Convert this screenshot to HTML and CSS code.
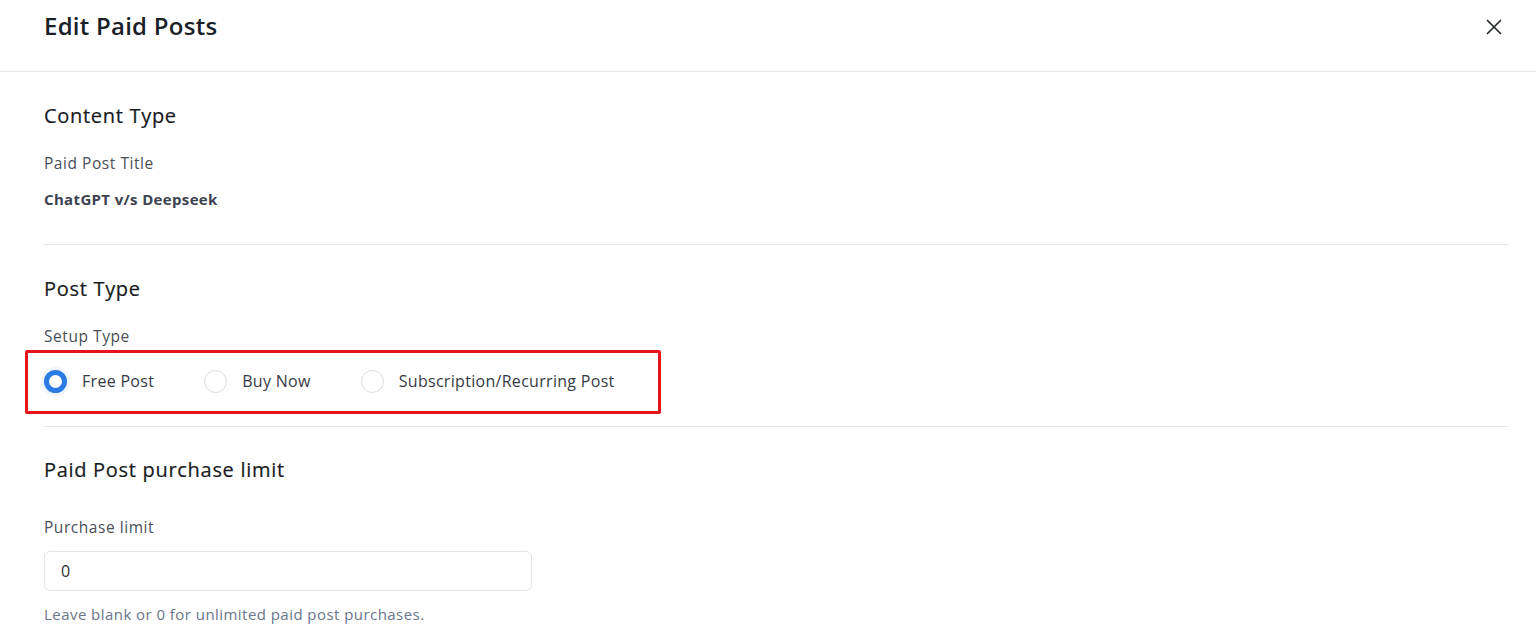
FILE: index.html
```html
<!DOCTYPE html>
<html lang="en">
<head>
<meta charset="utf-8">
<title>Edit Paid Posts</title>
<link rel="stylesheet" href="styles.css">
</head>
<body>
<div class="modal">
  <header class="modal-header">
    <h1 class="modal-title">Edit Paid Posts</h1>
    <button class="close-btn" aria-label="Close">
      <svg width="16" height="16" viewBox="0 0 16 16" fill="none" stroke="#25282e" stroke-width="1.7" stroke-linecap="round"><path d="M1.5 1.5 14.5 14.5M14.5 1.5 1.5 14.5"/></svg>
    </button>
  </header>
  <main class="modal-body">
    <section class="section">
      <h2 class="section-title">Content Type</h2>
      <div class="field-label">Paid Post Title</div>
      <div class="field-value">ChatGPT v/s Deepseek</div>
    </section>
    <section class="section">
      <h2 class="section-title">Post Type</h2>
      <div class="field-label">Setup Type</div>
      <div class="radio-group">
        <label class="radio"><span class="radio-dot checked"></span><span>Free Post</span></label>
        <label class="radio"><span class="radio-dot"></span><span>Buy Now</span></label>
        <label class="radio"><span class="radio-dot"></span><span>Subscription/Recurring Post</span></label>
        <div class="highlight"></div>
      </div>
    </section>
    <section class="section last">
      <h2 class="section-title">Paid Post purchase limit</h2>
      <div class="field-label spaced">Purchase limit</div>
      <div class="input">0</div>
      <div class="help">Leave blank or 0 for unlimited paid post purchases.</div>
    </section>
  </main>
</div>
</body>
</html>
```

FILE: styles.css
```css
* { box-sizing: border-box; }
html, body { margin: 0; padding: 0; background: #fff; }
body {
  font-family: "Open Sans", "Noto Sans", sans-serif;
  color: #1f232b;
  overflow: hidden;
}
.modal { width: 1536px; }
.modal-header {
  height: 72px;
  border-bottom: 1px solid #e3e5e8;
  display: flex;
  align-items: center;
  justify-content: space-between;
  padding: 0 34px 0 44px;
}
.modal-title {
  margin: 0;
  margin-top: -19px;
  font-size: 24px;
  line-height: 32px;
  font-weight: 600;
  color: #1b1f27;
  letter-spacing: 0.25px;
}
.close-btn {
  border: none;
  background: none;
  padding: 0;
  width: 16px;
  height: 16px;
  margin-top: -17px;
  display: flex;
}
.modal-body { padding: 0 28px 0 44px; }
.section {
  border-bottom: 1px solid #e3e5e8;
  padding-top: 31px;
}
.section:first-child { padding-bottom: 35px; }
.section.last { border-bottom: none; padding-top: 30px; }
.section-title {
  margin: 0;
  font-size: 20px;
  font-weight: 500;
  color: #171a21;
  line-height: 26px;
  letter-spacing: 0.7px;
  -webkit-text-stroke: 0.2px #171a21;
}
.field-label {
  margin-top: 24px;
  font-size: 15.5px;
  color: #4a4f59;
  line-height: 20px;
  letter-spacing: 0.55px;
}
.field-label.spaced { margin-top: 34px; }
.field-value {
  margin-top: 16px;
  font-size: 15px;
  font-weight: 700;
  color: #3d4250;
  line-height: 20px;
  letter-spacing: 0.35px;
}
.radio-group {
  position: relative;
  display: flex;
  align-items: center;
  height: 56px;
  margin-top: 7px;
  margin-bottom: 17px;
}
.radio {
  display: flex;
  align-items: center;
  gap: 15px;
  font-size: 16px;
  color: #363b45;
  margin-right: 50px;
  letter-spacing: 0.3px;
}
.radio-dot {
  width: 23px;
  height: 23px;
  border-radius: 50%;
  border: 1.5px solid #d9dbe1;
  background: #fff;
  flex: none;
}
.radio-dot.checked {
  border: 5px solid #2a7be4;
  box-shadow: 0 0 0 3px rgba(42, 123, 228, 0.08);
}
.highlight {
  position: absolute;
  left: -19px;
  top: -3px;
  width: 636px;
  height: 64px;
  border: 3px solid #e8141c;
  border-radius: 2px;
  pointer-events: none;
}
.input {
  margin-top: 14px;
  width: 488px;
  height: 40px;
  border: 1px solid #e1e3e8;
  border-radius: 6px;
  padding: 0 16px;
  display: flex;
  align-items: center;
  font-size: 16px;
  color: #2a2e36;
}
.help {
  margin-top: 13px;
  font-size: 15px;
  color: #6b7589;
  line-height: 20px;
  letter-spacing: 0.45px;
}
```
